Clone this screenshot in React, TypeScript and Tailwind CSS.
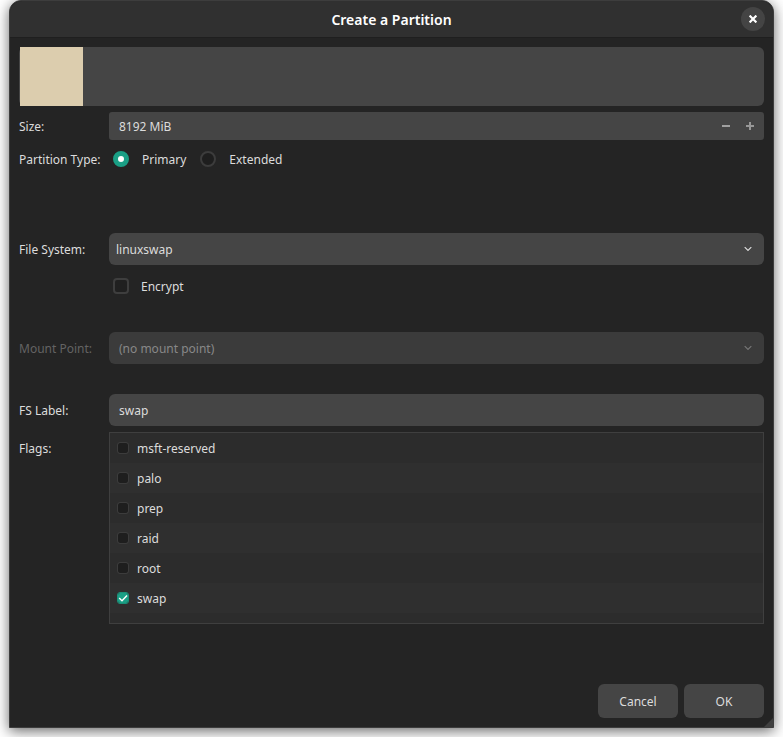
import { useState } from "react";
import type { ReactNode } from "react";

const FLAGS = ["msft-reserved", "palo", "prep", "raid", "root", "swap"];

function Chevron() {
  return (
    <svg
      viewBox="0 0 8 5"
      className="pointer-events-none absolute top-1/2 right-3 h-[5px] w-2 -translate-y-1/2"
      fill="none"
      stroke="currentColor"
      strokeWidth="1.2"
      aria-hidden="true"
    >
      <path d="M0.7 0.7 L4 4 L7.3 0.7" />
    </svg>
  );
}

function Row({ id, label, muted, children }: { id: string; label: string; muted?: boolean; children: ReactNode }) {
  return (
    <div className="grid grid-cols-[90px_1fr] items-center">
      <label htmlFor={id} className={muted ? "text-[#636363]" : ""}>
        {label}
      </label>
      {children}
    </div>
  );
}

function Radio({ label, checked, onChange }: { label: string; checked: boolean; onChange: () => void }) {
  return (
    <label className="flex items-center gap-[13px]">
      <input
        type="radio"
        name="partition-type"
        checked={checked}
        onChange={onChange}
        className="h-4 w-4 appearance-none rounded-full border-2 border-[#3c3c3c] bg-[#1e1e1e] checked:border-5 checked:border-[#1a9f85] checked:bg-white"
      />
      {label}
    </label>
  );
}

export default function App() {
  const [type, setType] = useState("Primary");
  const [size, setSize] = useState(8192);
  const [flags, setFlags] = useState<string[]>(["swap"]);
  const toggle = (flag: string) =>
    setFlags(flags.includes(flag) ? flags.filter((f) => f !== flag) : [...flags, flag]);

  return (
    <div className="min-h-screen overflow-hidden bg-white px-[9px] pb-[9px] font-['Noto_Sans',sans-serif] text-[12px] leading-[19px] text-[#dcdcdc]">
      <section
        role="dialog"
        aria-labelledby="title"
        className="relative rounded-t-xl border border-[#3d3d3d] bg-[#242424] shadow-[0_3px_14px_rgba(0,0,0,0.6)]"
      >
        <header className="grid h-[37px] grid-cols-[1fr_auto_1fr] items-center rounded-t-xl border-b border-[#1f1f1f] bg-[#303030] px-2">
          <h1 id="title" className="col-start-2 pt-0.5 text-[14px] leading-5 font-semibold text-white">
            Create a Partition
          </h1>
          <button
            type="button"
            aria-label="Close"
            className="flex h-6 w-6 items-center justify-center justify-self-end rounded-full bg-[#444444] text-white"
          >
            <svg viewBox="0 0 8 8" className="h-2 w-2" stroke="currentColor" strokeWidth="2.2" aria-hidden="true">
              <path d="M0.6 0.6 L7.4 7.4 M7.4 0.6 L0.6 7.4" />
            </svg>
          </button>
        </header>

        <form className="flex flex-col gap-1.5 p-[9px]" onSubmit={(e) => e.preventDefault()}>
          <div className="h-[59px] rounded-md bg-[#454545] pl-px">
            <div className="h-full w-[63px] bg-[#dccdae]" />
          </div>

          <Row id="size" label="Size:">
            <div className="flex h-7 items-center rounded-[3px] bg-[#454545] pr-0.5 pl-2.5">
              <input
                id="size"
                value={`${size} MiB`}
                onChange={(e) => setSize(parseInt(e.target.value) || 0)}
                className="min-w-0 flex-1 bg-transparent outline-none"
              />
              <button type="button" aria-label="Decrease" onClick={() => setSize(size - 1)} className="flex h-6 w-6 items-center justify-center text-[#a0a0a0]">
                <svg viewBox="0 0 8 8" className="h-2 w-2" aria-hidden="true" fill="currentColor">
                  <path d="M0 3h8v2H0z" />
                </svg>
              </button>
              <button type="button" aria-label="Increase" onClick={() => setSize(size + 1)} className="flex h-6 w-6 items-center justify-center text-[#a0a0a0]">
                <svg viewBox="0 0 8 8" className="h-2 w-2" aria-hidden="true" fill="currentColor">
                  <path d="M0 3h8v2H0z M3 0h2v8H3z" fillOpacity="0.9" />
                </svg>
              </button>
            </div>
          </Row>

          <div role="radiogroup" aria-labelledby="type-label" className="grid h-[26px] grid-cols-[90px_1fr] items-center">
            <span id="type-label">Partition Type:</span>
            <div className="flex gap-3.5 pl-1">
              {["Primary", "Extended"].map((t) => (
                <Radio key={t} label={t} checked={type === t} onChange={() => setType(t)} />
              ))}
            </div>
          </div>

          <div className="mt-[55px]">
            <Row id="fs" label="File System:">
              <div className="relative">
                <select id="fs" className="h-8 w-full appearance-none rounded-md bg-[#454545] px-[7px] outline-none">
                  <option>linuxswap</option>
                </select>
                <Chevron />
              </div>
            </Row>
          </div>

          <label className="ml-[94px] flex h-[30px] items-center gap-3 self-start">
            <input
              type="checkbox"
              className="h-4 w-4 appearance-none rounded-sm border-2 border-[#3e3e3e] bg-[#202020]"
            />
            Encrypt
          </label>

          <div className="mt-[25px]">
            <Row id="mount" label="Mount Point:" muted>
              <div className="relative text-[#767676]">
                <select
                  id="mount"
                  disabled
                  className="h-8 w-full appearance-none rounded-md bg-[#3b3b3b] px-2.5 text-[#888888] opacity-100"
                >
                  <option>(no mount point)</option>
                </select>
                <Chevron />
              </div>
            </Row>
          </div>

          <div className="mt-6">
            <Row id="fs-label" label="FS Label:">
              <input id="fs-label" defaultValue="swap" className="h-8 w-full min-w-0 rounded-md bg-[#454545] px-2.5 outline-none" />
            </Row>
          </div>

          <div className="grid grid-cols-[90px_1fr]">
            <span id="flags-label" className="pt-[7px]">
              Flags:
            </span>
            <ul aria-labelledby="flags-label" className="h-48 overflow-hidden border border-[#3f3f3f] bg-[#2c2c2c]">
              {FLAGS.map((flag) => (
                <li key={flag} className="even:bg-[#2f2f2f]">
                  <label className="flex h-[30px] items-center gap-[9px] pl-2">
                    <span className="relative flex">
                      <input
                        type="checkbox"
                        checked={flags.includes(flag)}
                        onChange={() => toggle(flag)}
                        className="h-2.5 w-2.5 appearance-none rounded-[2px] bg-[#1e1e1e] outline outline-[#3c3c3c] checked:bg-[#1a9f85] checked:outline-[#1b8f78]"
                      />
                      {flags.includes(flag) && (
                        <svg
                          viewBox="0 0 10 10"
                          className="pointer-events-none absolute inset-0 h-2.5 w-2.5"
                          fill="none"
                          stroke="white"
                          strokeWidth="1.4"
                          aria-hidden="true"
                        >
                          <path d="M1.2 5 L4 7.8 L9 2.4" />
                        </svg>
                      )}
                    </span>
                    {flag}
                  </label>
                </li>
              ))}
            </ul>
          </div>

          <div className="mt-[54px] flex justify-end gap-1.5">
            <button type="button" className="h-[34px] w-20 rounded-md bg-[#454545]">
              Cancel
            </button>
            <button type="submit" className="h-[34px] w-20 rounded-md bg-[#454545]">
              OK
            </button>
          </div>
        </form>
        <svg viewBox="0 0 9 9" className="absolute right-0 bottom-0 h-[9px] w-[9px]" aria-hidden="true">
          <path d="M9 0V9H0z" fill="#3f3f3f" />
        </svg>
      </section>
    </div>
  );
}
